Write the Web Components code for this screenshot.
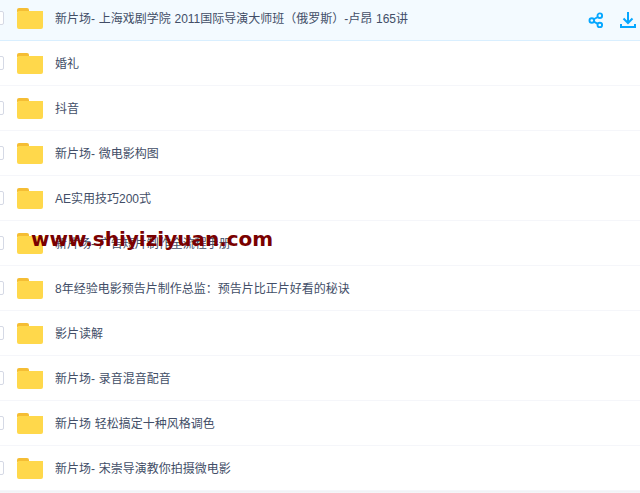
<!DOCTYPE html>
<html>
<head>
<meta charset="utf-8">
<style>
  html, body { margin: 0; padding: 0; background: #fff; overflow: hidden; height: 493px; }
  body { font-family: "Liberation Sans", "Noto Sans CJK SC", sans-serif; }
</style>
</head>
<body>
<file-list>
  <file-row active>新片场- 上海戏剧学院 2011国际导演大师班（俄罗斯）-卢昂 165讲</file-row>
  <file-row>婚礼</file-row>
  <file-row>抖音</file-row>
  <file-row>新片场- 微电影构图</file-row>
  <file-row>AE实用技巧200式</file-row>
  <file-row>新片场- 广告短片制作全流程手册<water-mark>www.shiyiziyuan.com</water-mark></file-row>
  <file-row>8年经验电影预告片制作总监：预告片比正片好看的秘诀</file-row>
  <file-row>影片读解</file-row>
  <file-row>新片场- 录音混音配音</file-row>
  <file-row>新片场 轻松搞定十种风格调色</file-row>
  <file-row>新片场- 宋崇导演教你拍摄微电影</file-row>
</file-list>
<script>
class FileList extends HTMLElement {
  constructor() {
    super();
    this.attachShadow({ mode: 'open' });
    this.shadowRoot.innerHTML = `
      <style>
        :host { display: flex; flex-direction: column; margin-top: -4px; width: 640px; }
        .end { height: 3px; background: linear-gradient(#f1f2f5, #f8f9fb); }
      </style>
      <slot></slot>
      <div class="end"></div>
    `;
  }
}

class FileRow extends HTMLElement {
  constructor() {
    super();
    this.attachShadow({ mode: 'open' });
    this.shadowRoot.innerHTML = `
      <style>
        :host {
          display: flex;
          align-items: center;
          height: 44px;
          border-bottom: 1px solid #f5f6fa;
          position: relative;
          color: #424e67;
          font-size: 12px;
        }
        :host([active]) { background: #f3faff; border-bottom-color: #d9efff; }
        .check {
          width: 12px; height: 12px;
          margin-left: -10px;
          border: 1px solid #d5d9e5;
          border-radius: 2px;
          background: #fff;
          flex: none;
        }
        .folder { width: 26px; height: 21px; margin: 1px 0 0 13px; flex: none; display: block; }
        .name { margin: 0 0 2px 12px; white-space: nowrap; word-spacing: .4px; }
        .actions {
          display: none;
          margin: 4px 0 0 auto;
          align-items: center;
          gap: 16px;
          padding-right: 4px;
        }
        :host([active]) .actions { display: flex; }
        svg { display: block; }
      </style>
      <span class="check"></span>
      <svg class="folder" viewBox="0 0 26 21">
        <path d="M0 2a2 2 0 0 1 2-2h8a2 2 0 0 1 2 2v2H0z" fill="#f5bd34"/>
        <path d="M0 5a2 2 0 0 1 2-2h24V19a2 2 0 0 1-2 2H2a2 2 0 0 1-2-2z" fill="#ffd84b"/>
      </svg>
      <span class="name"><slot></slot></span>
      <div class="actions">
        <svg width="16" height="16" viewBox="0 0 16 16" fill="none" stroke="#06a7ff" stroke-width="1.900">
          <circle cx="3.800" cy="8.500" r="2.300"/>
          <circle cx="11.800" cy="3.700" r="2.300"/>
          <circle cx="11.800" cy="13" r="2.300"/>
          <path d="M5.800 7.300 9.800 5M5.800 9.700l4 2.100"/>
        </svg>
        <svg width="16" height="16" viewBox="0 0 16 16" fill="none" stroke="#06a7ff" stroke-width="2">
          <path d="M8 0v11M3.500 6.500 8 11l4.500-4.500M1 12v3h14v-3"/>
        </svg>
      </div>
    `;
  }
}

class WaterMark extends HTMLElement {
  constructor() {
    super();
    this.attachShadow({ mode: 'open' });
    this.shadowRoot.innerHTML = `
      <style>
        :host {
          position: absolute;
          left: 31px;
          top: 6px;
          color: #7a0000;
          font: bold 20px "DejaVu Sans", sans-serif;
          white-space: nowrap;
        }
      </style>
      <slot></slot>
    `;
  }
}

customElements.define('file-list', FileList);
customElements.define('file-row', FileRow);
customElements.define('water-mark', WaterMark);
</script>
</body>
</html>
